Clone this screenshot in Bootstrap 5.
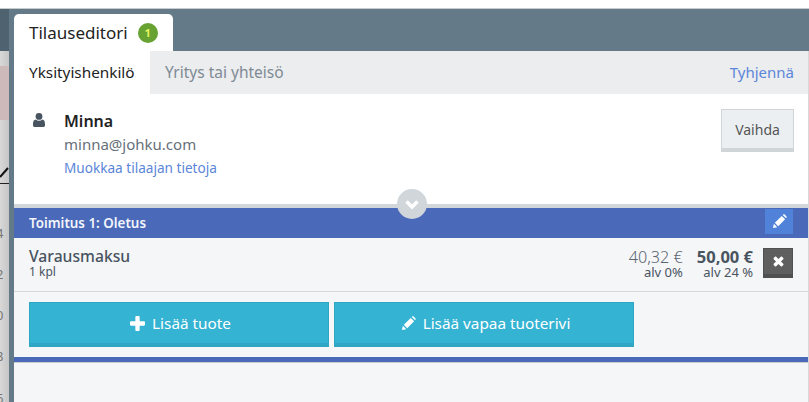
<!DOCTYPE html>
<html lang="fi">
<head>
    <meta charset="UTF-8">
    <meta name="viewport" content="width=device-width, initial-scale=1.0">
    <title>Tilauseditori</title>
    <link href="https://cdn.jsdelivr.net/npm/bootstrap@5.3.0/dist/css/bootstrap.min.css" rel="stylesheet">
    <style>
        html, body { height: 402px; overflow: hidden; }
        body { background: #fff; font-family: "Noto Sans", sans-serif; color: #48545f; font-size: 14px; }
        a { text-decoration: none; color: #5b86d9; }

        .top-gap { height: 9px; border-bottom: 1px solid #c9cccf; }
        .stage { height: 393px; }

        /* page behind the drawer, only a sliver is visible */
        .behind { width: 9px; overflow: hidden; background: linear-gradient(90deg, #d8d8d8, #c6c6c6); font-size: 13px; color: #777; }
        .behind-head { height: 42px; background: #4e6270; }
        .behind-space { height: 15px; }
        .behind-pink { height: 54px; background: #cdb9b9; }
        .behind-mark { height: 92.500px; }
        .behind-mark svg { display: block; width: 9px; height: 65px; }
        .tick { height: 41.300px; line-height: 41.300px; margin-left: -4px; }

        .drawer { background: #647a89; padding-left: 5px; }
        .tab-strip { height: 42px; padding-top: 5px; }
        .main-tab { width: 159px; height: 37px; background: #fff; border-radius: 5px 5px 0 0; padding-left: 15px; font-size: 17px; color: #222; line-height: 37px; }
        .count { width: 20px; height: 20px; border-radius: 50%; background: #67a233; color: #e4f25c; font-size: 11px; font-weight: 700; line-height: 20px; text-align: center; margin-left: 10px; }

        .sheet { background: #f5f6f8; border-right: 1px solid #d8d8d8; }
        .sub-tabs { height: 43px; background: #ebedef; line-height: 42px; font-size: 15.500px; padding-right: 14px; }
        .sub-on { width: 136px; background: #fff; padding-left: 15px; color: #222; font-size: 15.300px; }
        .sub-off { padding-left: 15px; color: #808a94; }
        .clear-link { font-size: 15px; }

        .customer { height: 110px; background: #fff; padding: 15px 14px 0 19px; }
        .person-icon { width: 12px; height: 14px; margin-top: 4px; margin-right: 19px; fill: #48545f; }
        .cust-name { font-size: 16px; font-weight: 600; color: #222; line-height: 24px; }
        .cust-mail { font-size: 15px; color: #66707a; line-height: 22px; }
        .cust-edit { font-size: 13.600px; line-height: 25px; display: block; }
        .btn.swap-btn { width: 73px; height: 43px; background: #ebeff2; border: 1px solid #d0d6d8; border-bottom-width: 4px; border-radius: 0; color: #555; font-size: 14px; padding: 0; }

        .delivery-head { height: 34px; background: #4a69b9; border-top: 4px solid #d0d6d9; color: #f2f5fb; font-weight: 600; font-size: 13.400px; padding: 1px 15px 0; position: relative; }
        .head-title { margin-top: 4px; }
        .collapse-dot { position: absolute; left: 383px; top: -19px; width: 30px; height: 30px; border-radius: 50%; background: #d0d6d9; }
        .collapse-dot svg { width: 16px; height: 16px; stroke: #fff; fill: none; stroke-width: 3.400; }
        .btn.edit-btn { width: 28px; height: 25px; background: #4f82d8; border: 0; border-radius: 0; padding: 0; }
        .edit-btn svg { width: 15px; height: 15px; fill: #fff; }

        .item-row { height: 54px; border-bottom: 1px solid #d5d8da; padding: 0 15px 3px; }
        .item-name { font-size: 15.700px; font-weight: 500; line-height: 18px; }
        .item-qty { font-size: 12px; line-height: 14px; }
        .price { font-size: 16.500px; line-height: 18px; text-align: right; }
        .price small { display: block; font-size: 13px; line-height: 13px; }
        .price-net { color: #5a6570; font-weight: 300; font-size: 16.200px; }
        .price-net small, .price-gross small { font-weight: 400; color: #48545f; }
        .price-gross { font-weight: 700; margin-left: 14px; }
        .btn.remove-btn { width: 30px; height: 30px; background: #5f5f5f; border: 1px solid #505050; border-bottom-width: 4px; border-radius: 0; padding: 0; margin-left: 10px; }
        .remove-btn svg { width: 11px; height: 11px; fill: #fff; }

        .add-row { padding: 10px 15px; gap: 5px; }
        .btn.add-btn { width: 300px; height: 45px; background: #34b3d3; border: 1px solid #2ea6c4; border-bottom-width: 4px; border-radius: 0; color: #fff; font-size: 15.300px; padding: 0 0 0 3px; }
        .add-btn svg { width: 15px; height: 15px; fill: #fff; margin-right: 7px; }
        .delivery-end { height: 6px; background: #4a69b9; border-bottom: 1px solid #c9ccce; }
    </style>
</head>
<body>
    <div class="top-gap"></div>
    <div class="stage d-flex">
        <!-- sliver of the page behind -->
        <div class="behind flex-shrink-0">
            <div class="behind-head"></div>
            <div class="behind-space"></div>
            <div class="behind-pink"></div>
            <div class="behind-mark">
                <svg viewBox="0 0 9 65"><path d="M0 57 8 48" stroke="#111" stroke-width="2" fill="none"/><path d="M0 63.500h9" stroke="#222" fill="none"/></svg>
            </div>
            <div class="tick">4</div>
            <div class="tick">2</div>
            <div class="tick">0</div>
            <div class="tick">8</div>
            <div class="tick">6</div>
        </div>

        <div class="drawer flex-grow-1 d-flex flex-column">
            <div class="tab-strip">
                <div class="main-tab d-flex align-items-center">
                    Tilauseditori <span class="count">1</span>
                </div>
            </div>

            <div class="sheet flex-grow-1">
                <div class="sub-tabs d-flex">
                    <div class="sub-on">Yksityishenkilö</div>
                    <div class="sub-off flex-grow-1">Yritys tai yhteisö</div>
                    <a class="clear-link" href="#">Tyhjennä</a>
                </div>

                <div class="customer d-flex">
                    <svg class="person-icon flex-shrink-0" viewBox="0 0 12 14"><circle cx="6" cy="3.400" r="3.400"/><path d="M2.600 6.600C3.500 7.400 4.600 7.800 6 7.800s2.500-.4 3.400-1.200C11 6.900 12 8.400 12 11v1.200c0 1-.7 1.800-1.800 1.800H1.800C.7 14 0 13.200 0 12.200V11c0-2.600 1-4.100 2.600-4.400z"/></svg>
                    <div class="flex-grow-1">
                        <div class="cust-name">Minna</div>
                        <div class="cust-mail">minna@johku.com</div>
                        <a class="cust-edit" href="#">Muokkaa tilaajan tietoja</a>
                    </div>
                    <button class="btn swap-btn flex-shrink-0" type="button">Vaihda</button>
                </div>

                <div class="delivery-head d-flex justify-content-between align-items-start">
                    <span class="head-title">Toimitus 1: Oletus</span>
                    <span class="collapse-dot d-flex align-items-center justify-content-center">
                        <svg viewBox="0 0 16 16"><path d="M2.500 5.500 8 11l5.500-5.500"/></svg>
                    </span>
                    <button class="btn edit-btn d-flex align-items-center justify-content-center" type="button">
                        <svg viewBox="0 0 16 16"><path d="M1 15l1-4.600 3.600 3.600zM3 9.400 10.400 2 14 5.600 6.600 13zM11.400 1l.6-.4c.6-.4 1.200-.4 1.700.1l1.600 1.600c.5.500.5 1.100.1 1.700l-.4.600z"/></svg>
                    </button>
                </div>

                <div class="item-row d-flex align-items-center">
                    <div class="flex-grow-1">
                        <div class="item-name">Varausmaksu</div>
                        <div class="item-qty">1 kpl</div>
                    </div>
                    <div class="price price-net">40,32 €<small>alv 0%</small></div>
                    <div class="price price-gross">50,00 €<small>alv 24 %</small></div>
                    <button class="btn remove-btn d-flex align-items-center justify-content-center" type="button">
                        <svg viewBox="0 0 12 12"><path d="M3.500.8 6 3.300 8.500.8c.4-.4 1-.4 1.400 0l1.300 1.300c.4.4.4 1 0 1.400L8.700 6l2.500 2.500c.4.4.4 1 0 1.400l-1.300 1.300c-.4.4-1 .4-1.400 0L6 8.700l-2.500 2.500c-.4.4-1 .4-1.400 0L.8 9.900c-.4-.4-.4-1 0-1.400L3.300 6 .8 3.500c-.4-.4-.4-1 0-1.400L2.100.8c.4-.4 1-.4 1.400 0z"/></svg>
                    </button>
                </div>

                <div class="add-row d-flex">
                    <button class="btn add-btn d-flex align-items-center justify-content-center" type="button">
                        <svg viewBox="0 0 14 14"><path d="M5 1c0-.6.4-1 1-1h2c.6 0 1 .4 1 1v4h4c.6 0 1 .4 1 1v2c0 .6-.4 1-1 1H9v4c0 .6-.4 1-1 1H6c-.6 0-1-.4-1-1V9H1c-.6 0-1-.4-1-1V6c0-.6.4-1 1-1h4z"/></svg>
                        Lisää tuote
                    </button>
                    <button class="btn add-btn d-flex align-items-center justify-content-center" type="button">
                        <svg viewBox="0 0 16 16"><path d="M1 15l1-4.600 3.600 3.600zM3 9.400 10.400 2 14 5.600 6.600 13zM11.400 1l.6-.4c.6-.4 1.200-.4 1.700.1l1.600 1.600c.5.500.5 1.100.1 1.700l-.4.600z"/></svg>
                        Lisää vapaa tuoterivi
                    </button>
                </div>
                <div class="delivery-end"></div>
            </div>
        </div>
    </div>
    <script src="https://cdn.jsdelivr.net/npm/bootstrap@5.3.0/dist/js/bootstrap.bundle.min.js"></script>
</body>
</html>
